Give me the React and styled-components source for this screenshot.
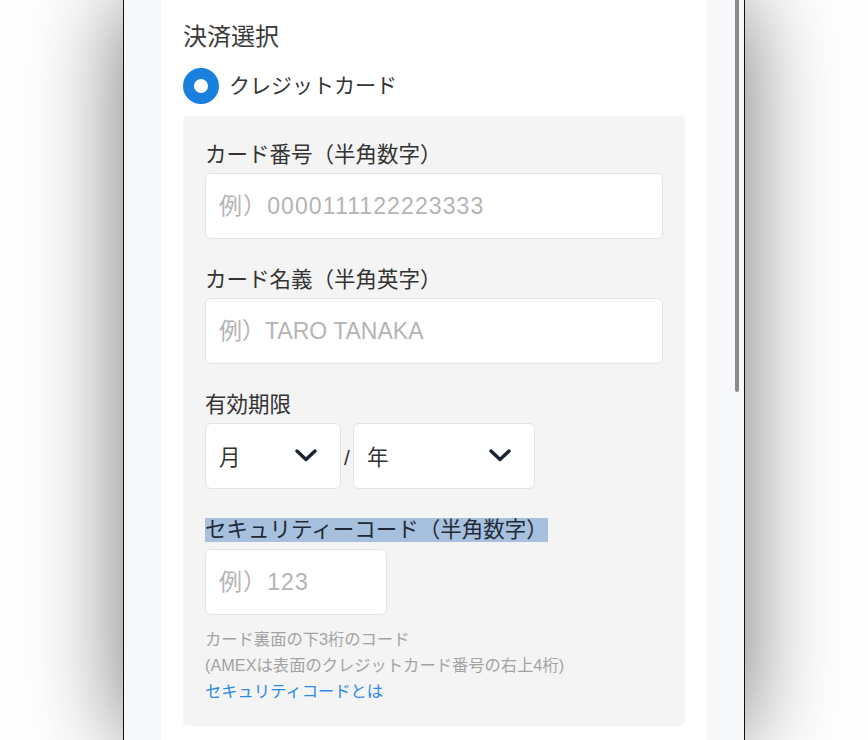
import styled, { createGlobalStyle } from "styled-components";

const GlobalStyle = createGlobalStyle`
    html, body {
        margin: 0;
        padding: 0;
        background: #ffffff;
        overflow: hidden;
    }
    body {
        font-family: "Liberation Sans", "Noto Sans CJK JP", sans-serif;
        color: #333333;
    }
`

const Stage = styled.div`
    display: flex;
    justify-content: center;
    width: 100%;
    height: 740px;
`

const Device = styled.div`
    position: relative;
    box-sizing: border-box;
    width: 622px;
    height: 740px;
    border-left: 1px solid #111111;
    border-right: 1px solid #111111;
    background: #f7f8fa;
    box-shadow: 0 0 90px rgba(0, 0, 0, 0.55);
    overflow: hidden;
`

const ScrollThumb = styled.div`
    position: absolute;
    top: -10px;
    right: 5px;
    width: 4px;
    height: 402px;
    border-radius: 2px;
    background: #8a8a8a;
`

const Panel = styled.main`
    box-sizing: border-box;
    width: 546px;
    height: 100%;
    margin: 0 auto;
    padding: 19px 22px 0;
    background: #ffffff;
`

const Heading = styled.h2`
    margin: 0;
    font-size: 24px;
    line-height: 36px;
    font-weight: 400;
    color: #3a3a3a;
`

const RadioRow = styled.label`
    display: flex;
    align-items: center;
    gap: 10px;
    margin-top: 13px;
    font-size: 21px;
    line-height: 36px;
    color: #333333;
`

const RadioDot = styled.span`
    box-sizing: border-box;
    width: 36px;
    height: 36px;
    border-radius: 50%;
    border: 11px solid #1a80de;
    background: #ffffff;
`

const Card = styled.section`
    display: flex;
    flex-direction: column;
    gap: 23px;
    margin-top: 12px;
    padding: 21px 22px 22px;
    border-radius: 5px;
    background: #f4f4f4;
`

const Field = styled.div`
    display: flex;
    flex-direction: column;
    align-items: flex-start;
`

const Label = styled.div`
    font-size: 21.5px;
    line-height: 36px;
    color: #333333;
`

const SelectedText = styled.span`
    display: inline-block;
    height: 24px;
    line-height: 24px;
    margin: 5px 0 7px;
    background: #a6c0dd;
    color: #1f2a36;
`

const TextInput = styled.input`
    box-sizing: border-box;
    width: ${(props) => props.$width || "100%"};
    height: 66px;
    padding: 0 13px;
    border: 1px solid #e3e3e3;
    border-radius: 6px;
    background: #ffffff;
    font-family: "Liberation Sans", "Noto Sans CJK JP", sans-serif;
    font-size: 23px;
    letter-spacing: ${(props) => (props.$numeric ? "1.1px" : "0")};
    color: #333333;
    outline: none;

    &::placeholder {
        color: #b4b4b4;
    }
`

const DateRow = styled.div`
    display: flex;
    align-items: center;
    gap: 2px;
`

const Slash = styled.span`
    width: 8px;
    margin-top: 4px;
    text-align: center;
    font-size: 21px;
    color: #333333;
`

const SelectBox = styled.div`
    box-sizing: border-box;
    display: flex;
    align-items: center;
    justify-content: space-between;
    width: ${(props) => props.$width};
    height: 66px;
    padding: 0 23px 2px 13px;
    border: 1px solid #e3e3e3;
    border-radius: 6px;
    background: #ffffff;
    font-size: 21.5px;
    color: #333333;
`

const Hints = styled.div`
    margin-top: 11px;
    font-size: 16.3px;
    line-height: 26px;
    color: #a3a3a3;
`

const HelpLink = styled.a`
    display: block;
    color: #2a8ae6;
    text-decoration: none;
`

function Chevron(){
    return (
        <svg width="22" height="13" viewBox="0 0 22 13" fill="none">
            <path d="M2 2 L11 10.5 L20 2" stroke="#1b2232" strokeWidth="3.4" strokeLinecap="round" strokeLinejoin="round" />
        </svg>
    );
}

function App(){
    return (
        <Stage>
            <GlobalStyle />
            <Device>
                <ScrollThumb />
                <Panel>
                    <Heading>決済選択</Heading>
                    <RadioRow>
                        <RadioDot />
                        クレジットカード
                    </RadioRow>

                    <Card>
                        <Field>
                            <Label>カード番号（半角数字）</Label>
                            <TextInput $numeric placeholder="例）0000111122223333" />
                        </Field>

                        <Field>
                            <Label>カード名義（半角英字）</Label>
                            <TextInput placeholder="例）TARO TANAKA" />
                        </Field>

                        <Field>
                            <Label>有効期限</Label>
                            <DateRow>
                                <SelectBox $width="136px">
                                    月
                                    <Chevron />
                                </SelectBox>
                                <Slash>/</Slash>
                                <SelectBox $width="182px">
                                    年
                                    <Chevron />
                                </SelectBox>
                            </DateRow>
                        </Field>

                        <Field>
                            <Label>
                                <SelectedText>セキュリティーコード（半角数字）</SelectedText>
                            </Label>
                            <TextInput $width="182px" $numeric placeholder="例）123" />
                            <Hints>
                                カード裏面の下3桁のコード<br />
                                (AMEXは表面のクレジットカード番号の右上4桁)
                                <HelpLink href="#">セキュリティコードとは</HelpLink>
                            </Hints>
                        </Field>
                    </Card>
                </Panel>
            </Device>
        </Stage>
    );
}

export default App;
